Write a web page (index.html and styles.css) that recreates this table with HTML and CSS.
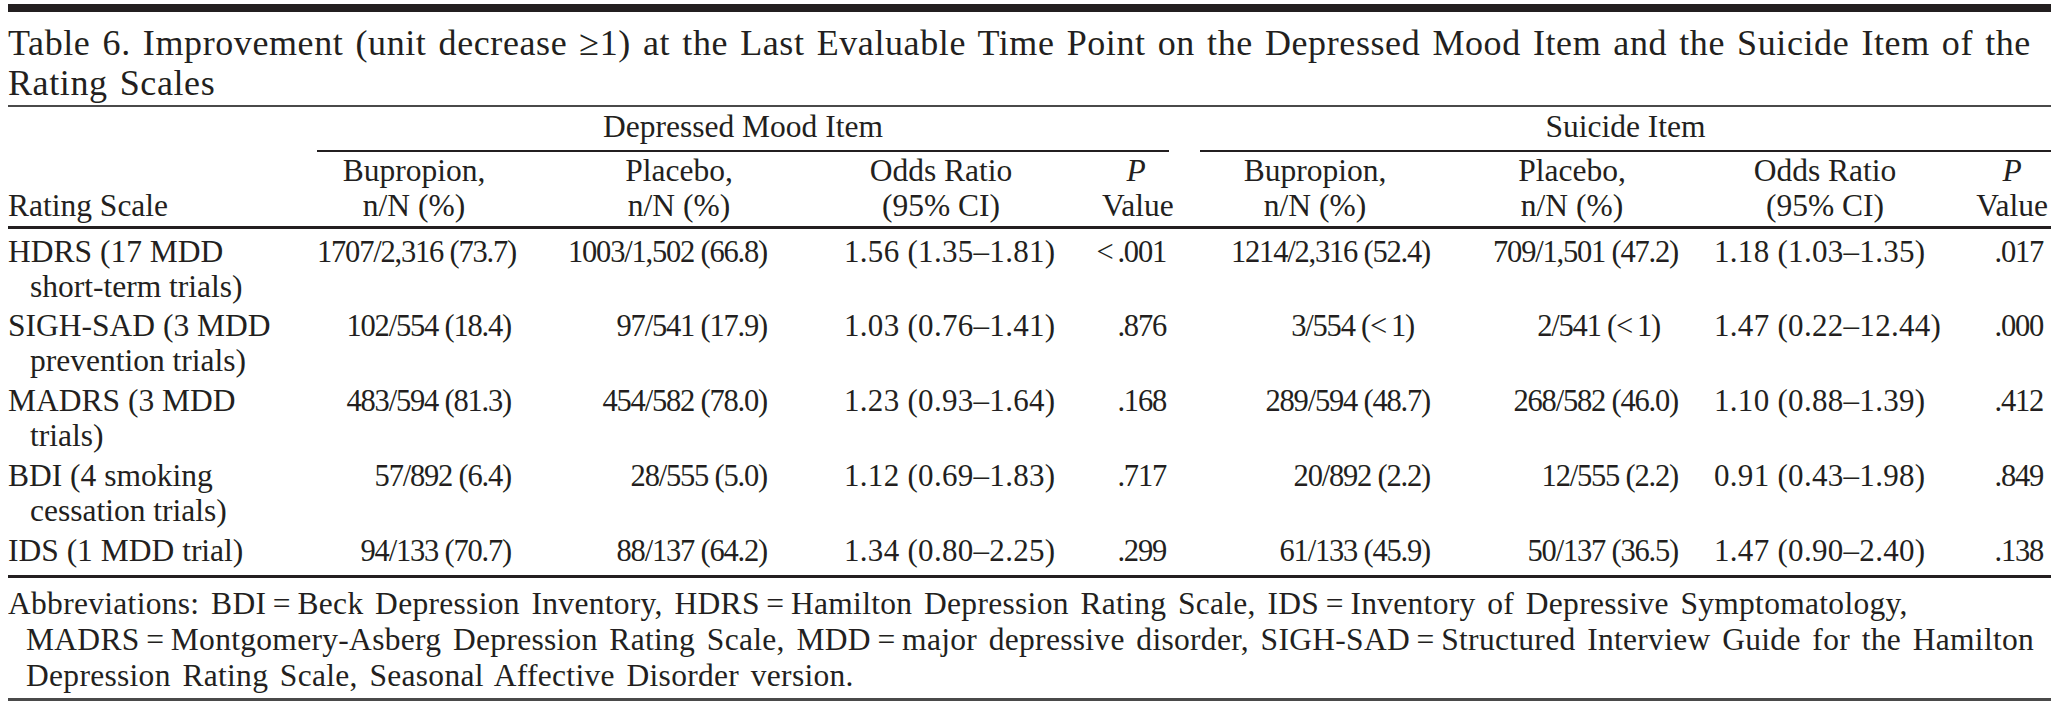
FILE: index.html
```html
<!DOCTYPE html>
<html lang="en">
<head>
<meta charset="utf-8">
<title>Table 6</title>
<link rel="stylesheet" href="styles.css">
</head>
<body>
<div class="topbar"></div>
<h1 class="title"><span class="tl">Table 6. Improvement (unit decrease ≥1) at the Last Evaluable Time Point on the Depressed Mood Item and the Suicide Item of the</span><span class="tl">Rating Scales</span></h1>
<table class="tbl">
  <colgroup>
    <col class="c0"><col class="c1"><col class="c2"><col class="c3"><col class="c4"><col class="c5"><col class="c6"><col class="c7"><col class="c8"><col class="c9">
  </colgroup>
  <thead>
    <tr class="grp">
      <th></th>
      <th colspan="4" class="g1"><div class="grule">Depressed Mood Item</div></th>
      <th></th>
      <th colspan="4" class="g2"><div class="grule">Suicide Item</div></th>
    </tr>
    <tr class="sub">
      <th class="rs">Rating Scale</th>
      <th class="h1">Bupropion,<br>n/N (%)</th>
      <th class="h2">Placebo,<br>n/N (%)</th>
      <th class="h3">Odds Ratio<br>(95% CI)</th>
      <th class="h4"><i>P</i><br>Value</th>
      <th></th>
      <th class="h6">Bupropion,<br>n/N (%)</th>
      <th class="h7">Placebo,<br>n/N (%)</th>
      <th class="h8">Odds Ratio<br>(95% CI)</th>
      <th class="h9"><i>P</i><br>Value</th>
    </tr>
  </thead>
  <tbody>
    <tr>
      <td class="name">HDRS (17 MDD<br>short-term trials)</td>
      <td class="num">1707/2,316 (73.7)</td>
      <td class="num">1003/1,502 (66.8)</td>
      <td class="or1">1.56 (1.35–1.81)</td>
      <td class="pv1">&lt;&thinsp;.001</td>
      <td></td>
      <td class="num">1214/2,316 (52.4)</td>
      <td class="num">709/1,501 (47.2)</td>
      <td class="or2">1.18 (1.03–1.35)</td>
      <td class="pv2">.017</td>
    </tr>
    <tr>
      <td class="name">SIGH-SAD (3 MDD<br>prevention trials)</td>
      <td class="num">102/554 (18.4)</td>
      <td class="num">97/541 (17.9)</td>
      <td class="or1">1.03 (0.76–1.41)</td>
      <td class="pv1">.876</td>
      <td></td>
      <td class="num lt1">3/554 (&lt;&thinsp;1)</td>
      <td class="num lt2">2/541 (&lt;&thinsp;1)</td>
      <td class="or2">1.47 (0.22–12.44)</td>
      <td class="pv2">.000</td>
    </tr>
    <tr>
      <td class="name">MADRS (3 MDD<br>trials)</td>
      <td class="num">483/594 (81.3)</td>
      <td class="num">454/582 (78.0)</td>
      <td class="or1">1.23 (0.93–1.64)</td>
      <td class="pv1">.168</td>
      <td></td>
      <td class="num">289/594 (48.7)</td>
      <td class="num">268/582 (46.0)</td>
      <td class="or2">1.10 (0.88–1.39)</td>
      <td class="pv2">.412</td>
    </tr>
    <tr>
      <td class="name">BDI (4 smoking<br>cessation trials)</td>
      <td class="num">57/892 (6.4)</td>
      <td class="num">28/555 (5.0)</td>
      <td class="or1">1.12 (0.69–1.83)</td>
      <td class="pv1">.717</td>
      <td></td>
      <td class="num">20/892 (2.2)</td>
      <td class="num">12/555 (2.2)</td>
      <td class="or2">0.91 (0.43–1.98)</td>
      <td class="pv2">.849</td>
    </tr>
    <tr class="last">
      <td class="name">IDS (1 MDD trial)</td>
      <td class="num">94/133 (70.7)</td>
      <td class="num">88/137 (64.2)</td>
      <td class="or1">1.34 (0.80–2.25)</td>
      <td class="pv1">.299</td>
      <td></td>
      <td class="num">61/133 (45.9)</td>
      <td class="num">50/137 (36.5)</td>
      <td class="or2">1.47 (0.90–2.40)</td>
      <td class="pv2">.138</td>
    </tr>
  </tbody>
</table>
<p class="note">Abbreviations: BDI&thinsp;=&thinsp;Beck Depression Inventory, HDRS&thinsp;=&thinsp;Hamilton Depression Rating Scale, IDS&thinsp;=&thinsp;Inventory of Depressive Symptomatology,<br>MADRS&thinsp;=&thinsp;Montgomery-Asberg Depression Rating Scale, MDD&thinsp;=&thinsp;major depressive disorder, SIGH-SAD&thinsp;=&thinsp;Structured Interview Guide for the Hamilton<br>Depression Rating Scale, Seasonal Affective Disorder version.</p>
</body>
</html>
```

FILE: styles.css
```css
html, body {
  background: #ffffff;
}

body {
  margin: 4px 8px 0;
  font-family: "Liberation Serif", "Times New Roman", serif;
  color: #231f20;
}

.topbar {
  height: 8px;
  background: #231f20;
}

.title {
  margin: 0;
  padding: 10.85px 0 2.15px;
  font-size: 36px;
  line-height: 40px;
  font-weight: normal;
  letter-spacing: 0.6px;
  word-spacing: 2.5px;
  border-bottom: 2px solid #4a4a4a;
}

.tl {
  display: block;
  white-space: nowrap;
}

.tbl {
  width: 2043px;
  table-layout: fixed;
  border-collapse: separate;
  border-spacing: 0;
  font-size: 31.5px;
  line-height: 35px;
}

.c0 { width: 309px; }
.c1 { width: 194px; }
.c2 { width: 256px; }
.c3 { width: 287px; }
.c4 { width: 126px; }
.c5 { width: 20px; }
.c6 { width: 230px; }
.c7 { width: 248px; }
.c8 { width: 263px; }
.c9 { width: 110px; }

th, td {
  padding: 0;
  font-weight: normal;
  white-space: nowrap;
}

.grp th {
  padding-top: 2px;
  text-align: center;
  vertical-align: bottom;
}

.g1 { padding-right: 11px; }

.grule {
  padding-bottom: 6px;
  border-bottom: 2px solid #231f20;
}

.sub th {
  padding-top: 1px;
  padding-bottom: 3px;
  border-bottom: 3px solid #231f20;
  text-align: center;
  vertical-align: bottom;
}

.sub th i {
  font-style: italic;
}

.sub .rs { text-align: left; }
.sub .h2 { padding-left: 80px; }
.sub .h3 { padding-left: 61px; }
.sub .h4 { padding-left: 48px; padding-right: 10px; }
.sub .h7 { padding-left: 36px; }
.sub .h8 { padding-left: 31px; }
.sub .h9 { padding-left: 32px; }

tbody td {
  padding-top: 4.75px;
  padding-bottom: 0;
  vertical-align: baseline;
}

.name {
  padding-left: 22px;
  text-indent: -22px;
  white-space: normal;
}

.num,
.pv1,
.pv2 {
  font-size: 30.5px;
  letter-spacing: -1.2px;
  text-align: right;
}

.lt1 { padding-right: 16px; }
.lt2 { padding-right: 18px; }

.or1,
.or2 {
  font-size: 31px;
  letter-spacing: 0.3px;
  text-align: left;
}

.or1 { padding-left: 77px; }
.or2 { padding-left: 36px; }

.pv1 { padding-right: 14px; }
.pv2 { padding-right: 8px; }

tbody tr.last td {
  padding-bottom: 6.25px;
  border-bottom: 3px solid #231f20;
}

.note {
  margin: 0;
  padding: 8.4px 0 3.6px 18px;
  text-indent: -18px;
  font-size: 31.5px;
  line-height: 36px;
  letter-spacing: 0.3px;
  word-spacing: 3.5px;
  white-space: nowrap;
  border-bottom: 3px solid #4a4a4a;
}
```
